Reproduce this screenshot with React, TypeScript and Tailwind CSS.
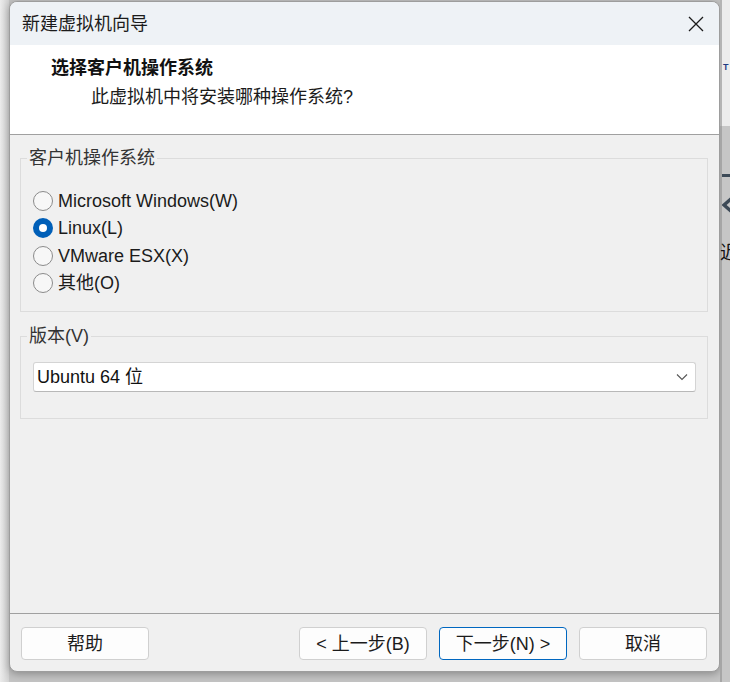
import React, { useState } from 'react';

const FONT = "font-['Liberation_Sans','Noto_Sans_CJK_SC',sans-serif]";

interface RadioProps {
  label: string;
  checked: boolean;
  onSelect: () => void;
}

const Radio: React.FC<RadioProps> = ({ label, checked, onSelect }) => (
  <button onClick={onSelect} className="flex items-center h-[27.5px] gap-[5px] text-left">
    {checked ? (
      <span className="w-[20px] h-[20px] rounded-full bg-[#005fb8] flex items-center justify-center">
        <span className="w-[8px] h-[8px] rounded-full bg-white" />
      </span>
    ) : (
      <span className="w-[20px] h-[20px] rounded-full border border-[#8b8b8b] bg-[#f7f7f7]" />
    )}
    <span className="text-[18px] leading-[24px] text-[#1b1b1b]">{label}</span>
  </button>
);

const FooterButton: React.FC<{ children: React.ReactNode; primary?: boolean }> = ({ children, primary }) => (
  <button
    className={`w-[128px] h-[33px] rounded-[4px] bg-[#fdfdfd] text-[18px] leading-[24px] text-[#1b1b1b] border ${
      primary ? 'border-[#0067c0]' : 'border-[#d0d0d0]'
    }`}
  >
    {children}
  </button>
);

const osList = ['Microsoft Windows(W)', 'Linux(L)', 'VMware ESX(X)', '其他(O)'];

const App: React.FC = () => {
  const [os, setOs] = useState(1);

  return (
    <div className={`w-[730px] h-[682px] flex overflow-hidden bg-[#c4c4c4] ${FONT}`}>
      {/* desktop edge on the left */}
      <div className="w-[9px] h-full bg-gradient-to-r from-[#ececec] to-[#d2d2d2]" />

      {/* wizard window */}
      <div className="w-[711px] h-[671px] mt-[1px] flex flex-col rounded-[8px] border border-[#9d9d9d] bg-[#f0f0f0] overflow-hidden shadow-[0_2px_8px_rgba(0,0,0,0.3)]">
        <div className="h-[43px] shrink-0 flex items-center justify-between bg-[#eef2f6] pl-[12px]">
          <span className="mb-[3px] text-[18px] leading-[24px] text-[#1b1b1b] font-['Noto_Sans_CJK_SC',sans-serif]">新建虚拟机向导</span>
          <button className="w-[46px] h-full flex items-center justify-center">
            <svg width="16" height="16" viewBox="0 0 16 16" fill="none" stroke="#1b1b1b" strokeWidth="1.3">
              <path d="M1 1L15 15M15 1L1 15" />
            </svg>
          </button>
        </div>

        <div className="h-[90px] shrink-0 bg-white border-b border-[#a0a0a0] pt-[11px]">
          <div className="pl-[41px] text-[18px] leading-[24px] font-bold text-[#111]">选择客户机操作系统</div>
          <div className="pl-[81px] mt-[5px] text-[18px] leading-[24px] text-[#1b1b1b]">此虚拟机中将安装哪种操作系统?</div>
        </div>

        <div className="h-[478px] shrink-0 pl-[10px]">
          <fieldset className="mt-[11px] w-[688px] h-[166px] border border-[#dcdcdc]">
            <legend className="ml-[6px] px-[2px] text-[18px] leading-[24px] text-[#333]">客户机操作系统</legend>
            <div className="pt-[17px] pl-[12px] flex flex-col">
              {osList.map((label, i) => (
                <Radio key={label} label={label} checked={os === i} onSelect={() => setOs(i)} />
              ))}
            </div>
          </fieldset>

          <fieldset className="mt-[12px] w-[688px] h-[95px] border border-[#dcdcdc]">
            <legend className="ml-[6px] px-[2px] text-[18px] leading-[24px] text-[#333]">版本(V)</legend>
            <div className="mt-[14px] ml-[12px] w-[663px] h-[30px] flex items-center justify-between rounded-[3px] bg-white border border-[#d4d4d4] border-b-[#b8b8b8] pl-[3px] pr-[7px]">
              <span className="text-[18px] leading-[24px] text-[#111]">Ubuntu 64 位</span>
              <svg width="12" height="8" viewBox="0 0 12 8" fill="none" stroke="#555" strokeWidth="1.1">
                <path d="M1 1.5L6 6.5L11 1.5" />
              </svg>
            </div>
          </fieldset>
        </div>

        <div className="flex-1 border-t border-[#a0a0a0] pt-[13px] pl-[11px] pr-[12px] flex justify-between items-start">
          <FooterButton>帮助</FooterButton>
          <div className="flex gap-[12px]">
            <FooterButton>&lt; 上一步(B)</FooterButton>
            <FooterButton primary>下一步(N) &gt;</FooterButton>
            <FooterButton>取消</FooterButton>
          </div>
        </div>
      </div>

      {/* strip of the window behind */}
      <div className="flex-1 h-full flex flex-col overflow-hidden">
        <div className="h-[126px] shrink-0 bg-[#ececec] border-l-[2px] border-[#b4b4b4] pt-[62px] pl-[1px]">
          <span className="block text-[9px] leading-[10px] font-bold text-[#1f3b82] font-['Liberation_Sans',sans-serif]">T</span>
        </div>
        <div className="flex-1 bg-[#c6c6c6] border-l-[2px] border-[#a6a6a6]">
          <div className="mt-[48px] h-[3px] bg-[#3d4a57]" />
          <svg className="mt-[20px]" width="12" height="16" viewBox="0 0 12 16" fill="none" stroke="#3d4a57" strokeWidth="3.5">
            <path d="M10 1L2 8L10 15" />
          </svg>
          <span className="block mt-[28px] -ml-[2px] text-[18px] leading-[20px] text-[#111] font-['Noto_Sans_CJK_SC',sans-serif]">近</span>
        </div>
      </div>
    </div>
  );
};

export default App;
